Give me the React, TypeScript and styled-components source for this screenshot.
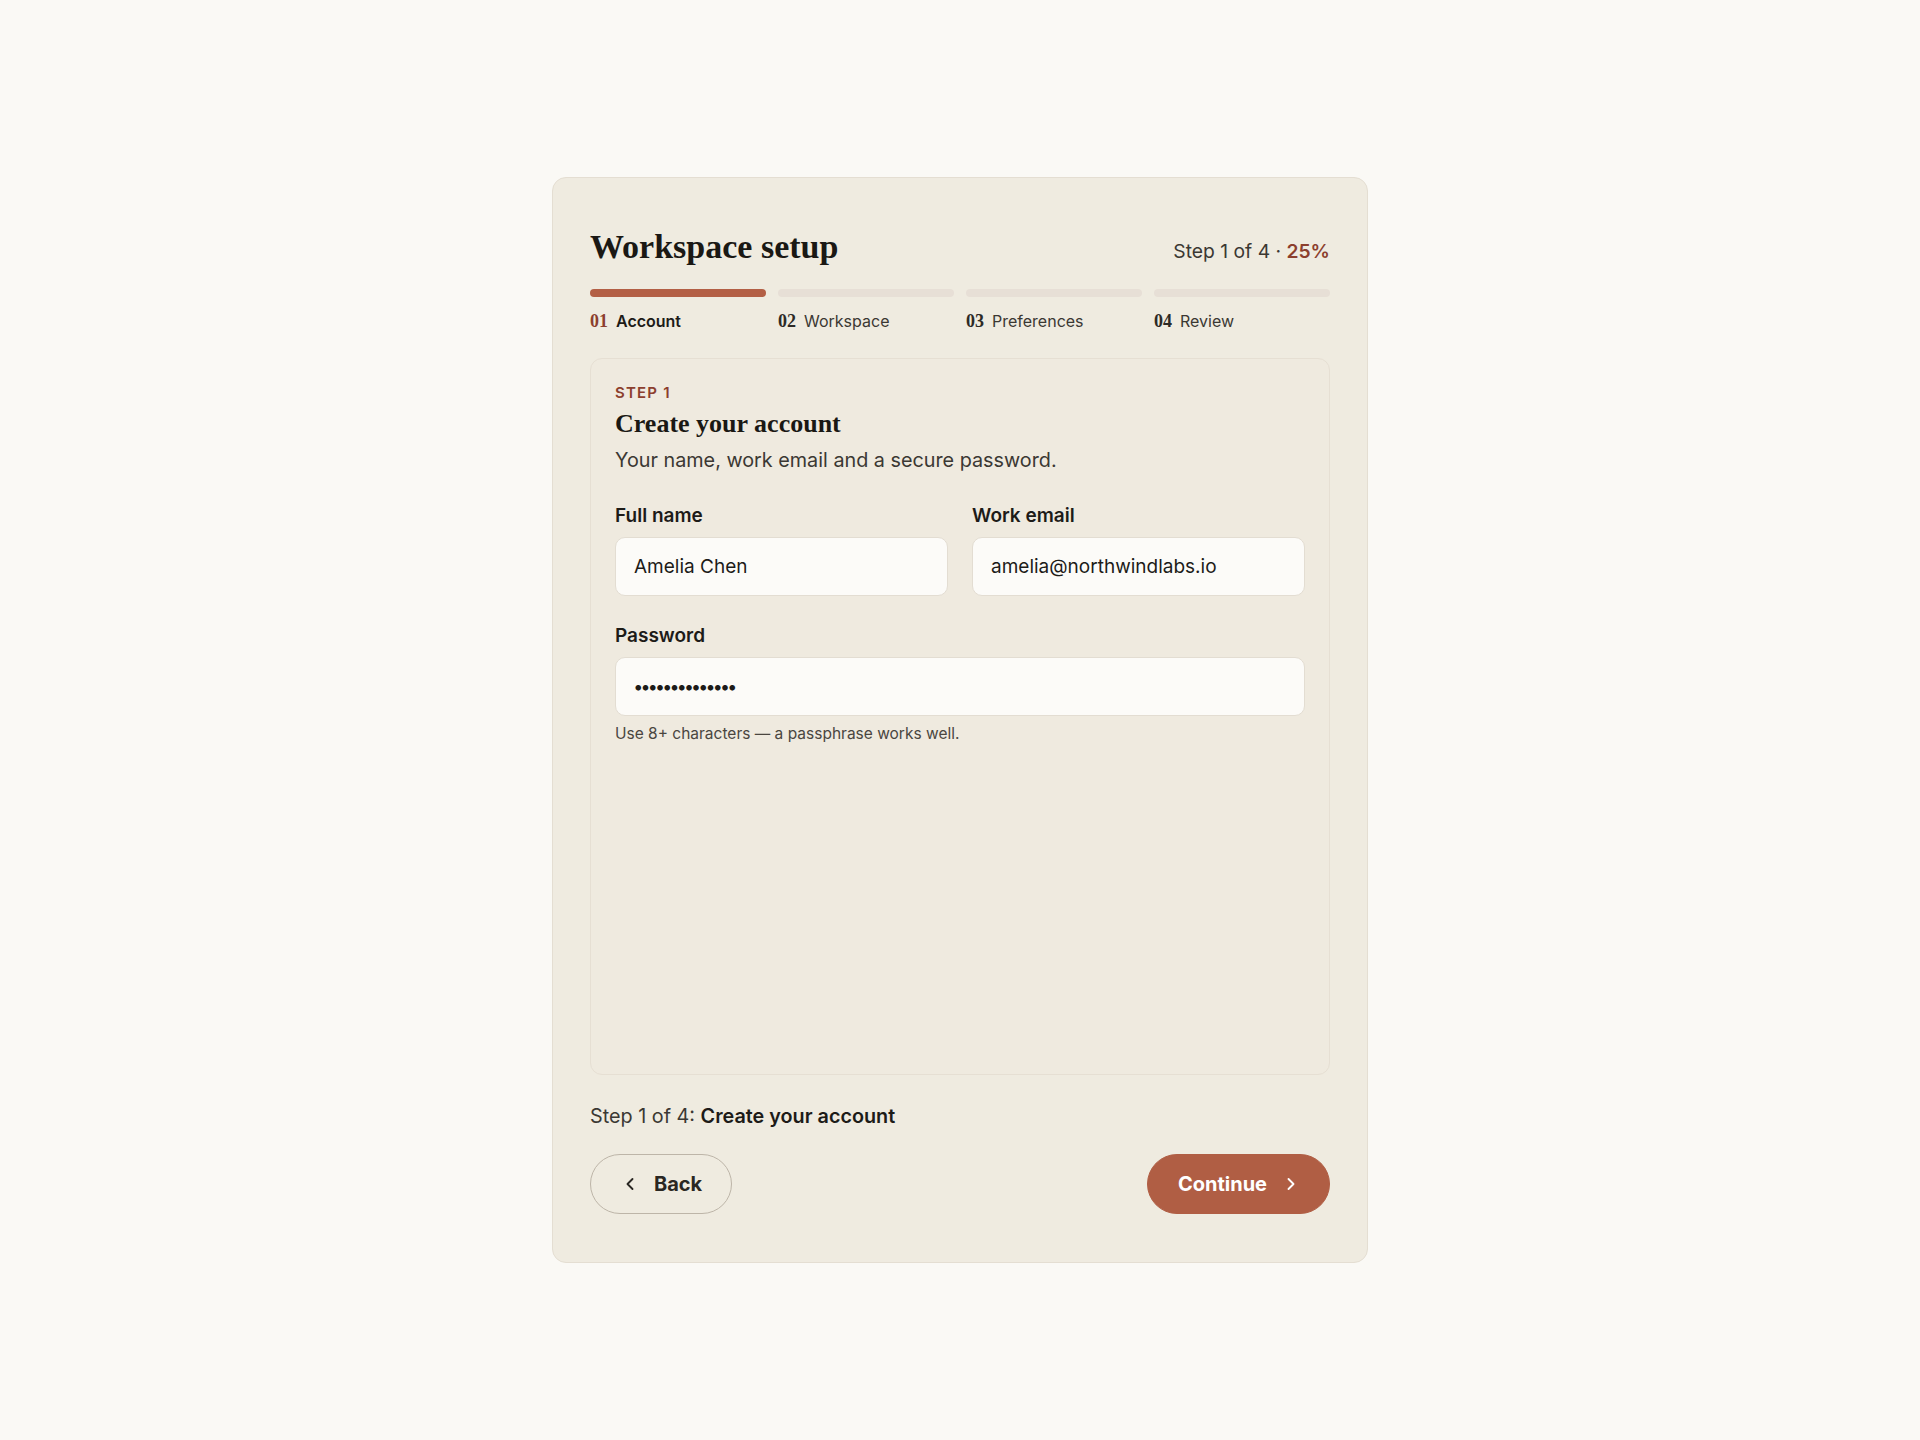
import React from "react"
import styled, { createGlobalStyle } from "styled-components"
import { ChevronLeft, ChevronRight } from "lucide-react"

const GlobalStyle = createGlobalStyle`
    * {
        box-sizing: border-box;
    }
    html, body {
        margin: 0;
        padding: 0;
        background: #faf9f5;
        font-family: Inter, "Noto Sans", sans-serif;
        color: #1d1b18;
    }
`;

type Step = {
    num: string;
    label: string;
}

const steps: Step[] = [
    { num: '01', label: 'Account' },
    { num: '02', label: 'Workspace' },
    { num: '03', label: 'Preferences' },
    { num: '04', label: 'Review' },
];

const current = 0;

export default function App() {
    return (
        <>
            <GlobalStyle />
            <Page>
                <Card>
                    <Header>
                        <Title>Workspace setup</Title>
                        <StepCount>
                            Step 1 of 4 · <Percent>25%</Percent>
                        </StepCount>
                    </Header>

                    <Stepper>
                        {steps.map((s, i) => (
                            <StepItem key={s.num}>
                                <Bar active={i <= current} />
                                <StepLabel>
                                    <StepNum active={i === current}>{s.num}</StepNum>
                                    <StepName active={i === current}>{s.label}</StepName>
                                </StepLabel>
                            </StepItem>
                        ))}
                    </Stepper>

                    <Panel>
                        <Eyebrow>Step 1</Eyebrow>
                        <PanelTitle>Create your account</PanelTitle>
                        <PanelText>Your name, work email and a secure password.</PanelText>

                        <Fields>
                            <FieldRow>
                                <Field>
                                    <FieldLabel htmlFor="name">Full name</FieldLabel>
                                    <TextInput id="name" type="text" defaultValue="Amelia Chen" />
                                </Field>
                                <Field>
                                    <FieldLabel htmlFor="email">Work email</FieldLabel>
                                    <TextInput id="email" type="email" defaultValue="amelia@northwindlabs.io" />
                                </Field>
                            </FieldRow>
                            <Field>
                                <FieldLabel htmlFor="password">Password</FieldLabel>
                                <TextInput id="password" type="password" masked defaultValue="northwind-2024" />
                                <Hint>Use 8+ characters — a passphrase works well.</Hint>
                            </Field>
                        </Fields>
                    </Panel>

                    <Summary>
                        Step 1 of 4: <strong>Create your account</strong>
                    </Summary>

                    <Actions>
                        <GhostButton type="button">
                            <ChevronLeft size={20} strokeWidth={2.25} />
                            Back
                        </GhostButton>
                        <PrimaryButton type="button">
                            Continue
                            <ChevronRight size={20} strokeWidth={2.25} />
                        </PrimaryButton>
                    </Actions>
                </Card>
            </Page>
        </>
    )
}

const Page = styled.div`
    min-height: 100vh;
    display: flex;
    align-items: center;
    justify-content: center;
`;

const Card = styled.div`
    width: 816px;
    padding: 49px 37px 48px;
    background: #efebe0;
    border: 1px solid #e4ded2;
    border-radius: 14px;
    display: flex;
    flex-direction: column;
`;

const Header = styled.div`
    display: flex;
    align-items: baseline;
    justify-content: space-between;
    margin-bottom: 22px;
`;

const Title = styled.h1`
    margin: 0;
    font-family: "Liberation Serif", "DejaVu Serif", serif;
    font-weight: 700;
    font-size: 34px;
    line-height: 1.2;
    color: #1a1814;
`;

const StepCount = styled.div`
    font-size: 19.3px;
    color: #3b3833;
`;

const Percent = styled.span`
    color: #8c3f2e;
    font-weight: 600;
`;

const Stepper = styled.div`
    display: grid;
    grid-template-columns: repeat(4, 1fr);
    gap: 12px;
    margin-bottom: 24px;
`;

const StepItem = styled.div`
    display: flex;
    flex-direction: column;
    gap: 13px;
`;

const Bar = styled.div<{ active?: boolean }>`
    height: 8px;
    border-radius: 4px;
    background: ${p => p.active ? '#b35f45' : '#e7dfd6'};
`;

const StepLabel = styled.div`
    display: flex;
    align-items: baseline;
    gap: 8px;
    line-height: 1.3;
`;

const StepNum = styled.span<{ active?: boolean }>`
    font-family: "Liberation Serif", "DejaVu Serif", serif;
    font-weight: 700;
    font-size: 18px;
    color: ${p => p.active ? '#8c3f2e' : '#2d2a26'};
`;

const StepName = styled.span<{ active?: boolean }>`
    font-size: 16px;
    font-weight: ${p => p.active ? 600 : 400};
    color: ${p => p.active ? '#1d1b18' : '#3b3833'};
`;

const Panel = styled.div`
    min-height: 717px;
    padding: 24px;
    border: 1px solid #e6dfd3;
    border-radius: 12px;
    background: #efeadf;
`;

const Eyebrow = styled.div`
    font-size: 15px;
    font-weight: 600;
    letter-spacing: 0.08em;
    text-transform: uppercase;
    line-height: 1.3;
    color: #8c3f2e;
    margin-bottom: 6px;
`;

const PanelTitle = styled.h2`
    margin: 0 0 6px;
    font-family: "Liberation Serif", "DejaVu Serif", serif;
    font-weight: 700;
    font-size: 26px;
    line-height: 1.25;
    color: #1a1814;
`;

const PanelText = styled.p`
    margin: 0;
    font-size: 19.8px;
    line-height: 1.4;
    color: #3b3833;
`;

const Fields = styled.div`
    margin-top: 30px;
    display: flex;
    flex-direction: column;
    gap: 28px;
`;

const FieldRow = styled.div`
    display: grid;
    grid-template-columns: 1fr 1fr;
    gap: 24px;
`;

const Field = styled.div`
    display: flex;
    flex-direction: column;
`;

const FieldLabel = styled.label`
    font-size: 19px;
    font-weight: 600;
    line-height: 1.3;
    color: #1d1b18;
    margin-bottom: 8px;
`;

const TextInput = styled.input<{ masked?: boolean }>`
    height: 59px;
    padding: 0 18px;
    border: 1px solid #e3ddd2;
    border-radius: 10px;
    background: #fcfbf8;
    font-family: Inter, "Noto Sans", sans-serif;
    font-size: ${p => p.masked ? '18px' : '19px'};
    font-weight: ${p => p.masked ? 700 : 400};
    letter-spacing: ${p => p.masked ? '-1.3px' : 'normal'};
    color: #1d1b18;
    outline: none;
    width: 100%;
`;

const Hint = styled.div`
    margin-top: 7px;
    font-size: 15.5px;
    line-height: 1.4;
    color: #4a463f;
`;

const Summary = styled.div`
    margin-top: 28px;
    font-size: 19.8px;
    line-height: 1.4;
    color: #3b3833;

    strong {
        font-weight: 600;
        color: #1d1b18;
    }
`;

const Actions = styled.div`
    margin-top: 24px;
    display: flex;
    justify-content: space-between;
    align-items: center;
`;

const BaseButton = styled.button`
    height: 60px;
    padding: 0 29px;
    border-radius: 999px;
    display: inline-flex;
    align-items: center;
    gap: 14px;
    font-family: Inter, "Noto Sans", sans-serif;
    font-size: 20px;
    font-weight: 700;
    cursor: pointer;
`;

const GhostButton = styled(BaseButton)`
    background: transparent;
    border: 1.5px solid #bdb5a8;
    color: #2a2723;
`;

const PrimaryButton = styled(BaseButton)`
    background: #b05e44;
    border: 1px solid #b05e44;
    color: #ffffff;
    padding: 0 28px 0 30px;
`;
